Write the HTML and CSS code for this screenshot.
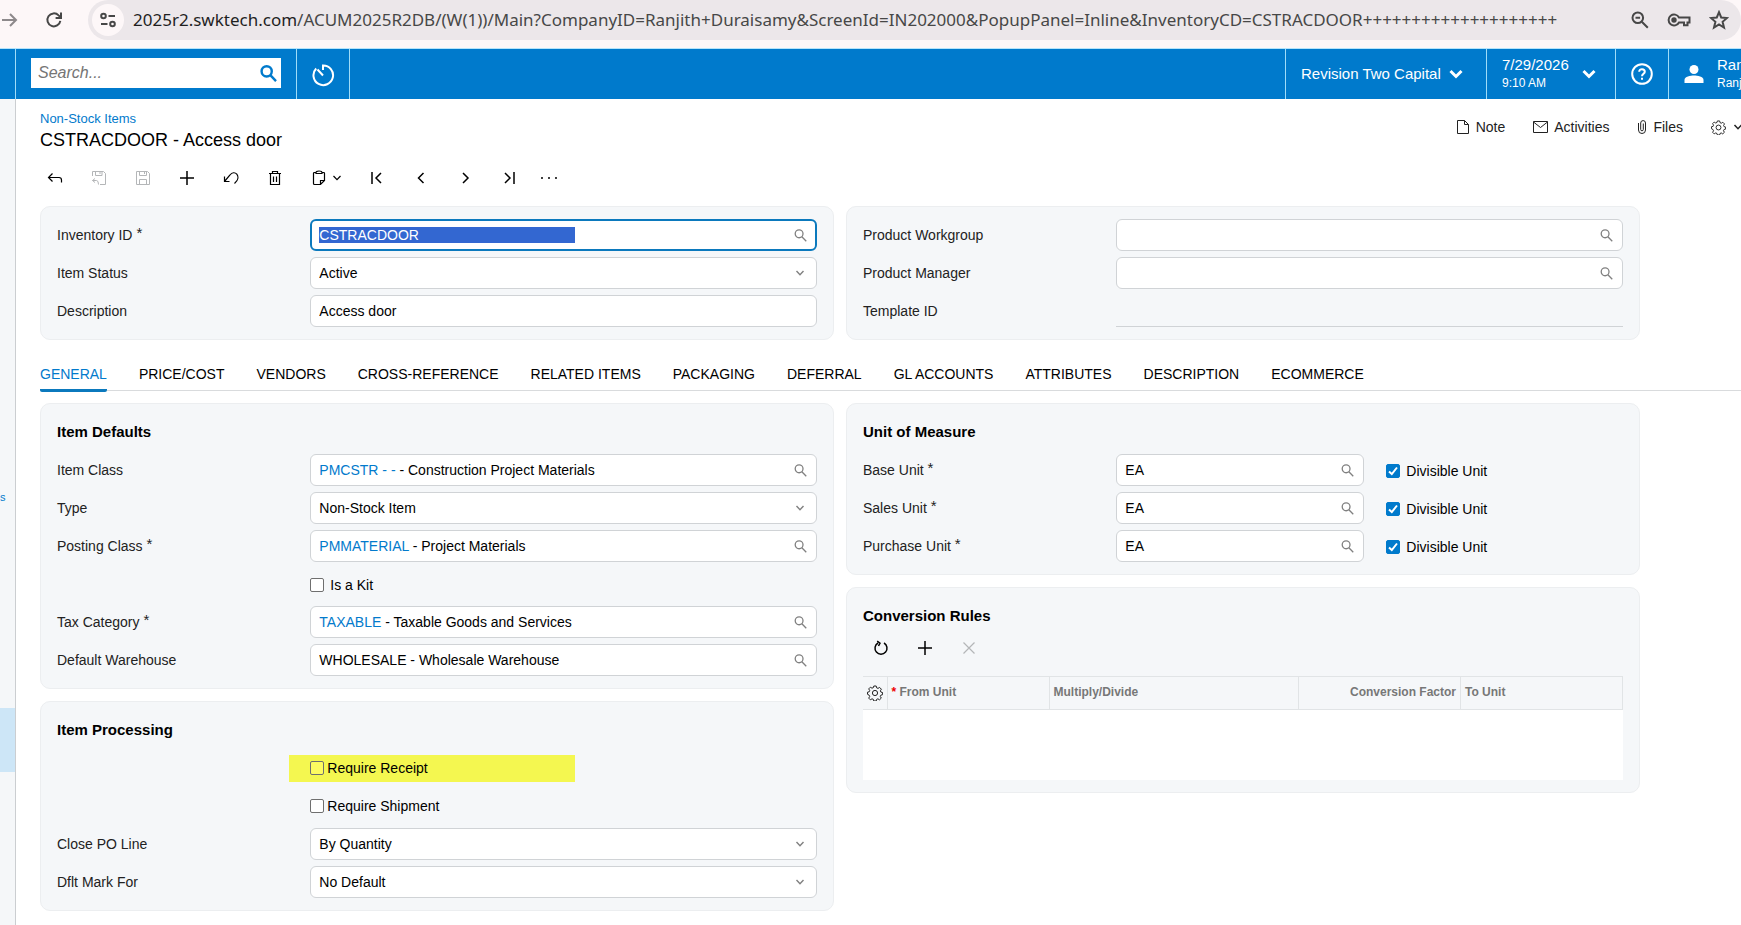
FILE: index.html
```html
<!DOCTYPE html>
<html lang="en">
<head>
<meta charset="utf-8">
<title>CSTRACDOOR - Access door</title>
<link rel="stylesheet" href="styles.css">
</head>
<body>
<svg width="0" height="0" class="sprite" aria-hidden="true">
  <symbol id="lens" viewBox="0 0 14 14"><circle cx="5.500" cy="5.200" r="4.200"/><path d="M8.500 8.400 13.200 13.200"/></symbol>
  <symbol id="down" viewBox="0 0 10 10"><path d="M1.500 3 5 6.700 8.500 3"/></symbol>
  <symbol id="plus" viewBox="0 0 16 16"><path d="M8 1V15M1 8H15"/></symbol>
  <symbol id="gear" viewBox="0 0 16 16"><circle cx="8" cy="8" r="2.600"/><path d="M6.800 1h2.400l.4 1.800 1.400.6 1.600-1 1.800 1.800-1 1.600.5 1.300 1.700.4v2.200l-1.700.4-.6 1.400 1 1.600-1.800 1.700-1.600-1-1.300.6-.4 1.600H6.800l-.4-1.600-1.400-.6-1.600 1-1.700-1.700 1-1.600-.6-1.400L.5 9.300V7.200L2.200 6.800l.5-1.300-1-1.600 1.700-1.700 1.600 1 1.400-.6z"/></symbol>
</svg>

<div class="browser">
  <button class="bbtn" aria-label="Forward"><svg class="forward" width="18" height="18" viewBox="0 0 18 18"><path d="M1 9H15M9 3l6 6-6 6"/></svg></button>
  <button class="bbtn reload" aria-label="Reload"><svg width="18" height="18" viewBox="0 0 18 18"><path d="M15.300 9.800A6.500 6.500 0 1 1 13.600 4.400L16 6.700M16 1.500V6.900H10.600"/></svg></button>
  <div class="omnibox">
    <button class="site" aria-label="Site information"><svg width="16" height="16" viewBox="0 0 16 16"><circle cx="3.500" cy="4" r="2.300"/><path d="M8.500 4H15M1 12H7.500"/><circle cx="12.500" cy="12" r="2.300"/></svg></button>
    <div class="url"><b>2025r2.swktech.com</b>/ACUM2025R2DB/(W(1))/Main?CompanyID=Ranjith+Duraisamy&amp;ScreenId=IN202000&amp;PopupPanel=Inline&amp;InventoryCD=CSTRACDOOR++++++++++++++++++++</div>
    <div class="tools">
      <button aria-label="Zoom"><svg width="18" height="18" viewBox="0 0 18 18"><circle cx="6.800" cy="6.800" r="5.300"/><path d="M10.800 10.800 16.800 16.800M4.500 6.800h4.600"/></svg></button>
      <button aria-label="Passwords"><svg width="24" height="16" viewBox="0 0 24 16"><path d="M12 5.500A5.500 5.500 0 1 0 12 10.500H17V13.200H20.500V10.500H22.500V5.500Z"/><circle cx="7" cy="8" r="1.700" fill="#474747"/></svg></button>
      <button aria-label="Bookmark"><svg width="20" height="20" viewBox="0 0 20 20"><path d="M10 2.200 12.200 7.500 18 8 13.600 11.800 15 17.500 10 14.400 5 17.500 6.400 11.800 2 8 7.800 7.500Z"/></svg></button>
    </div>
  </div>
</div>

<header class="top">
  <div class="edge"></div>
  <div class="searchcell">
    <div class="search"><input type="text" placeholder="Search..." aria-label="Search"><svg width="17" height="17"><use href="#lens"/></svg></div>
  </div>
  <button class="cell recent" aria-label="Recent"><svg width="24" height="24" viewBox="0 0 24 24"><path d="M12 7V2.500A9.800 9.800 0 1 1 5.200 5.500M6.500 6.500 12 12.500"/></svg></button>
  <div class="fill"></div>
  <button class="cell company">Revision Two Capital<svg width="14" height="14" viewBox="0 0 14 14"><path d="M1.500 4 7 9.500 12.500 4"/></svg></button>
  <button class="cell date"><span>7/29/2026<small>9:10 AM</small></span><svg width="14" height="14" viewBox="0 0 14 14"><path d="M1.500 4 7 9.500 12.500 4"/></svg></button>
  <button class="cell help" aria-label="Help"><svg width="22" height="22" viewBox="0 0 22 22"><circle cx="11" cy="11" r="9.800"/><path d="M8.200 8.700C8.200 5.300 13.800 5.400 13.800 8.700 13.800 10.700 11 10.800 11 13.200M11 14.700v2"/></svg></button>
  <button class="cell user"><svg width="20" height="20" viewBox="0 0 20 20"><circle cx="10" cy="5.500" r="4.500"/><path d="M.5 19V16C.5 12.500 6.500 11.500 10 11.500s9.500 1 9.500 4.500v3Z"/></svg><span>Ran<small>Ranj</small></span></button>
</header>

<div class="body">
  <nav class="side" aria-label="Menu"><a href="#">s</a><span class="current"></span></nav>
  <main>
    <div class="heading">
      <div><a href="#">Non-Stock Items</a><h1>CSTRACDOOR - Access door</h1></div>
      <div class="actions">
        <button><svg width="14" height="16" viewBox="0 0 14 16"><path d="M1.500 1.500H8.500L12.500 5.500V14.500H1.500ZM8.500 1.500V5.500H12.500"/></svg>Note</button>
        <button><svg width="15" height="16" viewBox="0 0 15 16"><path d="M.5 2.500h14v11H.5ZM.5 3 7.500 8.500 14.500 3"/></svg>Activities</button>
        <button><svg width="10" height="16" viewBox="0 0 10 16"><path d="M1.500 4V11A3.500 3.500 0 0 0 8.500 11V4A2.400 2.400 0 0 0 3.700 4V10.500A1.300 1.300 0 0 0 6.300 10.500V4.500"/></svg>Files</button>
        <button aria-label="Settings"><svg width="15" height="15"><use href="#gear"/></svg><svg class="tiny" width="10" height="10"><use href="#down"/></svg></button>
      </div>
    </div>

    <div class="toolbar">
      <button aria-label="Back"><svg viewBox="0 0 16 16"><path d="M5.500 3.500 1.500 7.500 5.500 11.500M1.500 7.500H12Q14.500 7.500 14.500 10V12.500"/></svg></button>
      <button aria-label="Save and close" disabled><svg viewBox="0 0 16 16"><path d="M1.500 6V1.500H12.500L14.500 3.500V14.500H9M4.500 1.500V5.500H11V1.500M9 1.500V4M4 8.500 1.500 10.500 4 12.500M1.500 10.500H5.500Q7.500 10.500 7.500 14.500"/></svg></button>
      <button aria-label="Save" disabled><svg viewBox="0 0 16 16"><path d="M1.500 1.500H12.500L14.500 3.500V14.500H1.500ZM4.500 1.500V5.500H11.500V1.500M9.500 1.500V4M4.500 14.500V9.500H11.500V14.500"/></svg></button>
      <button aria-label="Add" class="bold"><svg viewBox="0 0 16 16"><use href="#plus"/></svg></button>
      <button aria-label="Undo"><svg viewBox="0 0 16 16"><path d="M1.500 6.500V11.500H6.500M1.500 11.500 7 5C9 2.300 12 2 13.800 4.200 15.700 6.700 15.200 10.500 11.500 13.500"/></svg></button>
      <button aria-label="Delete"><svg viewBox="0 0 16 16"><path d="M2 3.500H14M5.500 3.500V1.500H10.500V3.500M3.500 3.500V14.500H12.500V3.500M6.500 6.500V12M9.500 6.500V12"/></svg></button>
      <button aria-label="Clipboard" class="wide"><svg viewBox="0 0 16 16"><path d="M5 2.500H3.500Q2.500 2.500 2.500 3.500V13.500Q2.500 14.500 3.500 14.500H9.500L13.500 10.500V3.500Q13.500 2.500 12.500 2.500H11M5 3.500V2.500Q5 1 8 1T11 2.500V3.500ZM9.500 14.500V10.500H13.500"/></svg><svg class="tiny" viewBox="0 0 10 10"><use href="#down"/></svg></button>
      <button aria-label="First" class="bold"><svg viewBox="0 0 16 16"><path d="M3 2V14M12 3 7 8 12 13"/></svg></button>
      <button aria-label="Previous" class="bold"><svg viewBox="0 0 16 16"><path d="M10.500 3 5.500 8 10.500 13"/></svg></button>
      <button aria-label="Next" class="bold"><svg viewBox="0 0 16 16"><path d="M6 3 11 8 6 13"/></svg></button>
      <button aria-label="Last" class="bold"><svg viewBox="0 0 16 16"><path d="M4 3 9 8 4 13M13 2V14"/></svg></button>
      <button aria-label="More" class="more"><svg viewBox="0 0 16 16"><path class="dots" d="M1 8h0M8 8h0M15 8h0"/></svg></button>
    </div>

    <div class="columns">
      <section class="panel">
        <div class="row"><label for="inv">Inventory ID <sup>*</sup></label><div class="field focus"><div class="marked"><input id="inv" type="text" value="CSTRACDOOR"></div><svg><use href="#lens"/></svg></div></div>
        <div class="row"><label for="status">Item Status</label><div class="field"><select id="status"><option>Active</option></select><svg class="chev"><use href="#down"/></svg></div></div>
        <div class="row"><label for="desc">Description</label><div class="field"><input id="desc" type="text" value="Access door"></div></div>
      </section>
      <section class="panel">
        <div class="row"><label for="wg">Product Workgroup</label><div class="field"><input id="wg" type="text"><svg><use href="#lens"/></svg></div></div>
        <div class="row"><label for="mgr">Product Manager</label><div class="field"><input id="mgr" type="text"><svg><use href="#lens"/></svg></div></div>
        <div class="row"><label for="tpl">Template ID</label><div class="field plain"><input id="tpl" type="text" readonly></div></div>
      </section>
    </div>

    <div class="tabs" role="tablist">
      <button role="tab" aria-selected="true" class="on">GENERAL</button>
      <button role="tab">PRICE/COST</button>
      <button role="tab">VENDORS</button>
      <button role="tab">CROSS-REFERENCE</button>
      <button role="tab">RELATED ITEMS</button>
      <button role="tab">PACKAGING</button>
      <button role="tab">DEFERRAL</button>
      <button role="tab">GL ACCOUNTS</button>
      <button role="tab">ATTRIBUTES</button>
      <button role="tab">DESCRIPTION</button>
      <button role="tab">ECOMMERCE</button>
    </div>

    <div class="columns">
      <div class="stack">
        <section class="panel">
          <h2>Item Defaults</h2>
          <div class="row"><span>Item Class</span><div class="field"><div class="value"><a href="#">PMCSTR - - </a>- Construction Project Materials</div><svg><use href="#lens"/></svg></div></div>
          <div class="row"><label for="type">Type</label><div class="field"><select id="type"><option>Non-Stock Item</option></select><svg class="chev"><use href="#down"/></svg></div></div>
          <div class="row"><span>Posting Class <sup>*</sup></span><div class="field"><div class="value"><a href="#">PMMATERIAL</a> - Project Materials</div><svg><use href="#lens"/></svg></div></div>
          <div class="row"><span></span><label class="check spaced"><input type="checkbox">Is a Kit</label></div>
          <div class="row"><span>Tax Category <sup>*</sup></span><div class="field"><div class="value"><a href="#">TAXABLE</a> - Taxable Goods and Services</div><svg><use href="#lens"/></svg></div></div>
          <div class="row"><label for="wh">Default Warehouse</label><div class="field"><input id="wh" type="text" value="WHOLESALE - Wholesale Warehouse"><svg><use href="#lens"/></svg></div></div>
        </section>
        <section class="panel">
          <h2>Item Processing</h2>
          <div class="row"><span></span><label class="check hilite"><input type="checkbox">Require Receipt</label></div>
          <div class="row"><span></span><label class="check"><input type="checkbox">Require Shipment</label></div>
          <div class="row"><label for="close">Close PO Line</label><div class="field"><select id="close"><option>By Quantity</option></select><svg class="chev"><use href="#down"/></svg></div></div>
          <div class="row"><label for="mark">Dflt Mark For</label><div class="field"><select id="mark"><option>No Default</option></select><svg class="chev"><use href="#down"/></svg></div></div>
        </section>
      </div>
      <div class="stack">
        <section class="panel">
          <h2>Unit of Measure</h2>
          <div class="row"><label for="bu">Base Unit <sup>*</sup></label><div class="pair"><div class="field"><input id="bu" type="text" value="EA"><svg><use href="#lens"/></svg></div><label class="check spaced"><input type="checkbox" checked>Divisible Unit</label></div></div>
          <div class="row"><label for="su">Sales Unit <sup>*</sup></label><div class="pair"><div class="field"><input id="su" type="text" value="EA"><svg><use href="#lens"/></svg></div><label class="check spaced"><input type="checkbox" checked>Divisible Unit</label></div></div>
          <div class="row"><label for="pu">Purchase Unit <sup>*</sup></label><div class="pair"><div class="field"><input id="pu" type="text" value="EA"><svg><use href="#lens"/></svg></div><label class="check spaced"><input type="checkbox" checked>Divisible Unit</label></div></div>
        </section>
        <section class="panel">
          <h2>Conversion Rules</h2>
          <div class="gridbar">
            <button aria-label="Refresh" class="refresh"><svg viewBox="0 0 16 16"><path d="M5 3A6 6 0 1 0 11 3M4.200 1.200 7 3.200 5.500 6"/></svg></button>
            <button aria-label="Add row" class="bold"><svg viewBox="0 0 16 16"><use href="#plus"/></svg></button>
            <button aria-label="Delete row" disabled><svg viewBox="0 0 16 16"><path d="M2.500 2.500 13.500 13.500M13.500 2.500 2.500 13.500"/></svg></button>
          </div>
          <table>
            <colgroup><col class="c0"><col class="c1"><col><col class="c1"><col class="c1"></colgroup>
            <thead><tr><th><svg width="16" height="16"><use href="#gear"/></svg></th><th><i>*</i> From Unit</th><th>Multiply/Divide</th><th class="num">Conversion Factor</th><th>To Unit</th></tr></thead>
            <tbody><tr><td colspan="5"></td></tr></tbody>
          </table>
        </section>
      </div>
    </div>
  </main>
</div>
</body>
</html>
```
FILE: styles.css
```css
* { box-sizing: border-box; }
html, body { height: 100%; }
body {
  margin: 0;
  display: flex;
  flex-direction: column;
  overflow: hidden;
  background: #fff;
  color: #000;
  font: 14px/20px "Liberation Sans", Arial, sans-serif;
}
button, input, select { font: inherit; color: inherit; background: none; border: 0; padding: 0; margin: 0; }
button { display: inline-flex; align-items: center; justify-content: center; white-space: nowrap; flex: none; }
svg { fill: none; stroke: currentColor; flex: none; }
a { color: #027acc; text-decoration: none; }
.sprite { position: absolute; }

/* browser bar */
.browser {
  flex: none;
  display: flex;
  height: 49px;
  padding-bottom: 8px;
  background: #fdf7f8;
  border-bottom: 1px solid #b5e4fb;
  color: #474747;
}
.bbtn { width: 20px; height: 40px; }
.bbtn svg { stroke-width: 2; }
.bbtn .forward { color: #8d898b; }
.reload { width: 68px; }
.omnibox {
  flex: 1;
  min-width: 0;
  display: flex;
  align-items: center;
  gap: 9px;
  height: 40px;
  padding: 0 12px 0 4px;
  background: #ece7ea;
  border-radius: 20px;
}
.omnibox svg { stroke-width: 2; }
.site { width: 32px; height: 32px; border-radius: 16px; background: #fdf7f8; }
.url {
  flex: 1;
  min-width: 0;
  overflow: hidden;
  white-space: nowrap;
  font: 17px/24px "Noto Sans", sans-serif;
}
.url b { font-weight: 400; color: #1f1f1f; }
.tools { display: flex; align-items: center; gap: 18px; }

/* application header */
.top { flex: none; display: flex; height: 50px; background: #007acc; color: #fff; }
.edge { width: 16px; border-right: 1px solid #9fdcf8; }
.searchcell { padding: 9px 15px; }
.search {
  display: flex;
  align-items: center;
  width: 250px;
  height: 30px;
  padding: 0 4px 0 7px;
  background: #fff;
  color: #007acc;
}
.search input { flex: 1; min-width: 0; font-size: 16px; font-style: italic; outline: 0; }
.search input::placeholder { color: #757575; }
.search svg { stroke-width: 2; }
.cell { border-left: 1px solid #9fdcf8; padding: 0 15px; font-size: 15px; text-align: left; justify-content: flex-start; }
.cell svg { stroke-width: 2; }
.recent { width: 54px; border-right: 1px solid #9fdcf8; padding: 2px 14px 0; }
.fill { flex: 1; }
.company svg, .date svg { stroke-width: 3; }
.company { width: 201px; gap: 8px; }
.date { width: 129px; gap: 13px; }
.cell span { line-height: 18px; }
.cell small { display: block; font-size: 12px; }
.help { width: 53px; }
.user { width: 73px; overflow: hidden; gap: 13px; }
.user svg { fill: #fff; stroke: none; }

/* page */
.body { flex: 1; display: flex; min-height: 0; }
.side {
  width: 16px;
  flex: none;
  display: flex;
  flex-direction: column;
  padding-top: 388px;
  background: #f5f7f9;
  border-right: 1px solid #cbced1;
}
.side a { font-size: 11px; }
.side .current { height: 64px; margin-top: 201px; background: #cde6f7; }
main { flex: 1; min-width: 0; padding: 10px 0 0 24px; }
.heading { display: flex; justify-content: space-between; }
.heading a { font-size: 13px; line-height: 20px; display: block; }
h1 { margin: 0; font-size: 18px; line-height: 22px; font-weight: 400; }
.actions { display: flex; gap: 28px; height: 36px; color: #222; }
.actions button { gap: 6px; }
.actions button:last-child { width: 30px; gap: 7px; justify-content: flex-start; }

.toolbar { display: flex; height: 32px; margin: 11px 0 12px; }
.toolbar button, .gridbar button { width: 44px; height: 32px; }
.toolbar button:first-child { width: 30px; margin-right: 7px; }
.toolbar svg, .gridbar svg { width: 16px; height: 16px; stroke-width: 1.2; }
.toolbar .bold svg, .gridbar .bold svg, .gridbar .refresh svg { stroke-width: 1.5; }
.toolbar button:disabled, .gridbar button:disabled { color: #b4b6b8; }
.toolbar button:disabled svg { stroke-width: 1; }
.toolbar .wide { width: 58px; gap: 5px; }
.toolbar .tiny { width: 10px; height: 10px; }
.tiny { stroke-width: 1.5; }
.toolbar .more { width: 36px; }
.dots { stroke-width: 2; stroke-linecap: round; }

.columns { display: grid; grid-template-columns: 1fr 1fr; gap: 12px; max-width: 1600px; align-items: start; }
.stack { display: grid; gap: 12px; min-width: 0; }
.panel {
  min-width: 0;
  padding: 12px 16px;
  display: grid;
  gap: 6px;
  background: #f5f7f9;
  border: 1px solid #eceef0;
  border-radius: 10px;
}
h2 { margin: 2px 0; font-size: 15px; line-height: 28px; }
.row { display: grid; grid-template-columns: 1fr 2fr; align-items: center; min-height: 32px; color: #222; }
sup { font-size: 15px; line-height: 0; vertical-align: 2px; }
.field {
  display: flex;
  align-items: center;
  height: 32px;
  min-width: 0;
  padding: 0 9px 0 8px;
  background: #fff;
  border: 1px solid #d0d3d6;
  border-radius: 6px;
  color: #000;
}
.field input, .field select, .field .value { flex: 1; min-width: 0; width: 100%; appearance: none; outline: 0; }
.field svg { width: 13px; height: 13px; margin-left: 8px; stroke-width: 1.4; color: #808080; }
.field .chev { width: 10px; height: 10px; margin-right: 2px; }
.focus { border: 2px solid #0b79bd; padding: 0 8px 0 7px; }
.marked { flex: 1; }
.field .marked input { width: 256px; height: 16px; background: #3367d1; color: #fff; display: block; }
.plain { background: none; border-width: 0 0 1px; border-radius: 0; }
.check { display: flex; align-items: center; gap: 3px; height: 27px; color: #000; }
.check input { width: 14px; height: 14px; appearance: none; border: 1px solid #6f6f6f; border-radius: 2px; background: #fff; }
.check input:checked {
  border-color: #007acc;
  background: #007acc url("data:image/svg+xml,%3Csvg xmlns='http://www.w3.org/2000/svg' viewBox='0 0 12 12'%3E%3Cpath d='M2 6.500 4.800 9 10 2.500' fill='none' stroke='white' stroke-width='2'/%3E%3C/svg%3E");
}
.spaced { gap: 6px; padding-top: 2px; }
.hilite { width: 286px; margin-left: -21px; padding-left: 21px; background: #f4f750; }
.hilite input { background: #fdfb60; }
.pair { display: grid; grid-template-columns: 248px 1fr; gap: 22px; align-items: center; }

.tabs { display: flex; gap: 32px; height: 38px; margin: 13px 0 12px; border-bottom: 1px solid #d9dbdd; }
.tabs button { height: 39px; border-bottom: 3px solid transparent; padding-top: 5px; }
.tabs .on { color: #027acc; border-color: #0b79bd; border-radius: 2px; }

.gridbar { display: flex; height: 32px; margin: -6px 0 6px -4px; }
table { width: 100%; border-collapse: collapse; table-layout: fixed; }
.c0 { width: 24px; }
.c1 { width: 162px; }
th {
  height: 33px;
  padding: 0 4px 2px;
  border: 1px solid #e1e4e6;
  border-left: 0;
  font-size: 12px;
  line-height: 16px;
  text-align: left;
  color: #777;
}
th:first-child { color: #222; padding-bottom: 0; }
th svg { display: block; }
th i { color: #e00; font-style: normal; }
.num { text-align: right; }
td { height: 70px; background: #fff; }
```
